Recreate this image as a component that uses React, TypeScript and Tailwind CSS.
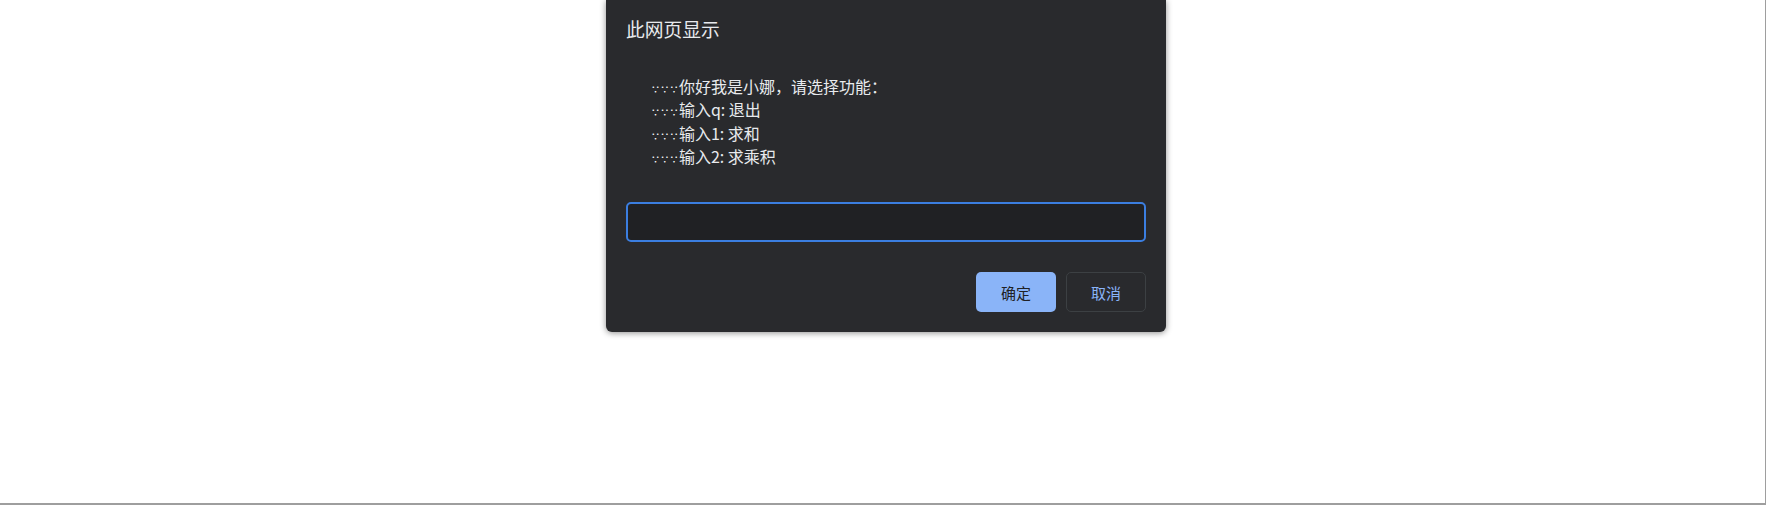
import React from "react";

const lines = ["你好我是小娜，请选择功能：", "输入q: 退出", "输入1: 求和", "输入2: 求乘积"];

export default function App() {
  return (
    <div className="w-[1766px] h-[505px] bg-white border-r border-b-2 border-[#9e9e9e] flex justify-center items-start pl-[7px] font-['Noto_Sans_CJK_SC',sans-serif]">
      <div className="w-[560px] bg-[#292a2d] rounded-b-[6px] shadow-[0_1px_6px_rgba(0,0,0,0.45)] px-[20px] pt-[16px] pb-[20px]">
        <div className="text-[18.75px] leading-[25px] text-[#e8eaed]">此网页显示</div>
        <div className="mt-[34px] pl-[25px] text-[16px] leading-[23.3px] text-[#e8eaed]">
          {lines.map((l) => (
            <div key={l} className="whitespace-nowrap h-[23.3px]">
              <span className="text-[9px] leading-none font-bold tracking-[0.3px] text-white">∵∵∵</span>
              {l}
            </div>
          ))}
        </div>
        <div className="mt-[34px] h-[40px] rounded-[5px] border-2 border-[#3b7ee0] bg-[#202124]" />
        <div className="mt-[30px] flex justify-end gap-[10px]">
          <button className="w-[80px] h-[40px] rounded-[5px] bg-[#8ab4f8] text-[#202124] text-[15px] leading-none">
            确定
          </button>
          <button className="w-[80px] h-[40px] rounded-[5px] border border-[#3c4043] text-[#8ab4f8] text-[15px] leading-none">
            取消
          </button>
        </div>
      </div>
    </div>
  );
}
